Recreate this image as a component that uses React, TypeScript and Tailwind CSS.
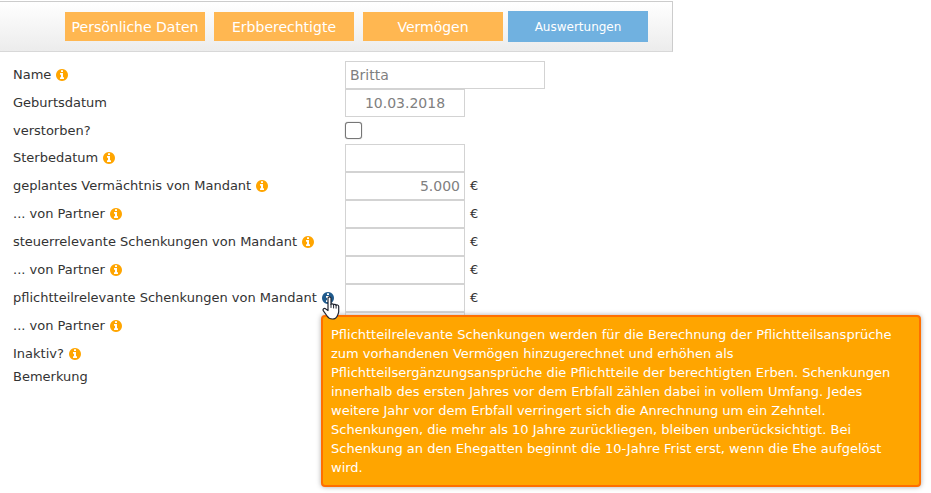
import { useId, useState } from 'react'

type FieldKind = 'name' | 'date' | 'checkbox' | 'amount' | 'note'

interface Field {
  label: string
  kind: FieldKind
  value?: string
  info?: boolean
  help?: string
}

const tabs = ['Persönliche Daten', 'Erbberechtigte', 'Vermögen']

const fields: Field[] = [
  { label: 'Name', kind: 'name', value: 'Britta', info: true },
  { label: 'Geburtsdatum', kind: 'date', value: '10.03.2018' },
  { label: 'verstorben?', kind: 'checkbox' },
  { label: 'Sterbedatum', kind: 'date', info: true },
  { label: 'geplantes Vermächtnis von Mandant', kind: 'amount', value: '5.000', info: true },
  { label: '... von Partner', kind: 'amount', info: true },
  { label: 'steuerrelevante Schenkungen von Mandant', kind: 'amount', info: true },
  { label: '... von Partner', kind: 'amount', info: true },
  {
    label: 'pflichtteilrelevante Schenkungen von Mandant',
    kind: 'amount',
    info: true,
    help: 'Pflichtteilrelevante Schenkungen werden für die Berechnung der Pflichtteilsansprüche zum vorhandenen Vermögen hinzugerechnet und erhöhen als Pflichtteilsergänzungsansprüche die Pflichtteile der berechtigten Erben. Schenkungen innerhalb des ersten Jahres vor dem Erbfall zählen dabei in vollem Umfang. Jedes weitere Jahr vor dem Erbfall verringert sich die Anrechnung um ein Zehntel. Schenkungen, die mehr als 10 Jahre zurückliegen, bleiben unberücksichtigt. Bei Schenkung an den Ehegatten beginnt die 10-Jahre Frist erst, wenn die Ehe aufgelöst wird.',
  },
  { label: '... von Partner', kind: 'amount', info: true },
  { label: 'Inaktiv?', kind: 'checkbox', info: true },
  { label: 'Bemerkung', kind: 'note' },
]

function InfoIcon() {
  return (
    <svg viewBox="0 128 1536 1536" className="size-3" fill="currentColor" aria-hidden="true">
      <path d="M1024 1376v-160q0-14-9-23t-23-9h-96v-512q0-14-9-23t-23-9h-320q-14 0-23 9t-9 23v160q0 14 9 23t23 9h96v320h-96q-14 0-23 9t-9 23v160q0 14 9 23t23 9h448q14 0 23-9t9-23zm-128-896v-160q0-14-9-23t-23-9h-192q-14 0-23 9t-9 23v160q0 14 9 23t23 9h192q14 0 23-9t9-23zm640 416q0 209-103 385.5t-279.5 279.5-385.5 103-385.5-103-279.5-279.5-103-385.5 103-385.5 279.5-279.5 385.5-103 385.5 103 279.5 279.5 103 385.5z" />
    </svg>
  )
}

function HandPointer() {
  return (
    <svg
      viewBox="0 0 18 24"
      className="pointer-events-none absolute top-1 left-0 z-20 h-6 w-[18px]"
      fill="#fff"
      stroke="#1f2430"
      strokeWidth="1.2"
      strokeLinejoin="round"
      strokeLinecap="round"
      aria-hidden="true"
    >
      <path d="M6 14.500V2.200C6 .4 9 .4 9 2.200V8.500c.2-1 2.600-1 2.600.4.300-.9 2.500-.8 2.500.6.300-.9 2.600-.7 2.600.9V15.500c0 1.700-.8 2.900-1.300 4.200-.9 2.200-2.400 3.300-5 3.300s-4.100-.9-5.300-3L1.400 14.900c-1.100-1.900.9-3.300 2.400-2z" />
      <path d="M9 8.500v3M11.600 9v3M14.100 9.600v2.600" strokeWidth="1" fill="none" />
    </svg>
  )
}

const boxClass = 'h-7 border border-[#d3d3d3] bg-white px-1 text-sm text-[#808080] outline-none'

function FieldControl({ id, field }: { id: string; field: Field }) {
  switch (field.kind) {
    case 'name':
      return <input id={id} type="text" defaultValue={field.value} className={`${boxClass} w-[200px]`} />
    case 'date':
      return <input id={id} type="text" defaultValue={field.value} className={`${boxClass} w-[120px] text-center`} />
    case 'checkbox':
      return (
        <input
          id={id}
          type="checkbox"
          className="size-[17px] appearance-none rounded-[3px] border border-[#767676] bg-white shadow-[0_0_1px_#767676] checked:bg-[#70b1e0]"
        />
      )
    case 'amount':
      return (
        <>
          <input id={id} type="text" defaultValue={field.value} className={`${boxClass} w-[120px] text-right`} />
          <span className="ml-[5px]">€</span>
        </>
      )
    case 'note':
      return <textarea id={id} className="h-20 w-[300px] resize-none border border-[#d3d3d3] bg-white" />
  }
}

function FieldRow({ field }: { field: Field }) {
  const id = useId()
  const [open, setOpen] = useState(Boolean(field.help))
  const height = field.kind === 'checkbox' ? 'h-[27px]' : field.kind === 'note' ? 'h-20' : 'h-7'

  return (
    <div className={`relative flex items-center ${height}`}>
      <div className={`flex w-[332px] shrink-0 items-center gap-[5px] ${field.kind === 'note' ? 'self-start' : ''}`}>
        <label htmlFor={id} className="whitespace-nowrap">
          {field.label}
        </label>
        {field.info && (
          <button
            type="button"
            aria-label={`Info: ${field.label}`}
            onClick={() => setOpen(!open)}
            className={`relative z-20 cursor-pointer ${field.help && open ? 'text-[#1f5a8c]' : 'text-[#ffa500]'}`}
          >
            <InfoIcon />
            {field.help && open && <HandPointer />}
          </button>
        )}
      </div>
      <FieldControl id={id} field={field} />
      {field.help && open && (
        <div
          role="tooltip"
          className="absolute top-[31px] left-[308px] z-10 w-[600px] rounded-[4px] border-2 border-[#ff6f00] bg-[#ffa500] p-2 leading-[19px] text-white shadow-[0_0_5px_#aaa]"
        >
          {field.help}
        </div>
      )}
    </div>
  )
}

export default function App() {
  return (
    <div className="min-h-screen overflow-hidden bg-white pt-px font-['DejaVu_Sans',Verdana,sans-serif] text-[13px] leading-5 text-[#333]">
      <nav className="flex w-fit items-center gap-[9px] border border-l-0 border-[#ccc] border-b-[#d8d8d8] bg-linear-to-b from-white to-[#ececec] py-[9px] pr-6 pl-[65px]">
        {tabs.map((tab) => (
          <button key={tab} type="button" className="h-[29px] w-[140px] cursor-pointer bg-[#ffb751] text-sm whitespace-nowrap text-white">
            {tab}
          </button>
        ))}
        <button type="button" className="-ml-1 h-[31px] w-[140px] cursor-pointer bg-[#70b1e0] text-xs text-white">
          Auswertungen
        </button>
      </nav>
      <form className="pt-[9px] pl-[13px]">
        {fields.map((field, index) => (
          <FieldRow key={index} field={field} />
        ))}
      </form>
    </div>
  )
}
